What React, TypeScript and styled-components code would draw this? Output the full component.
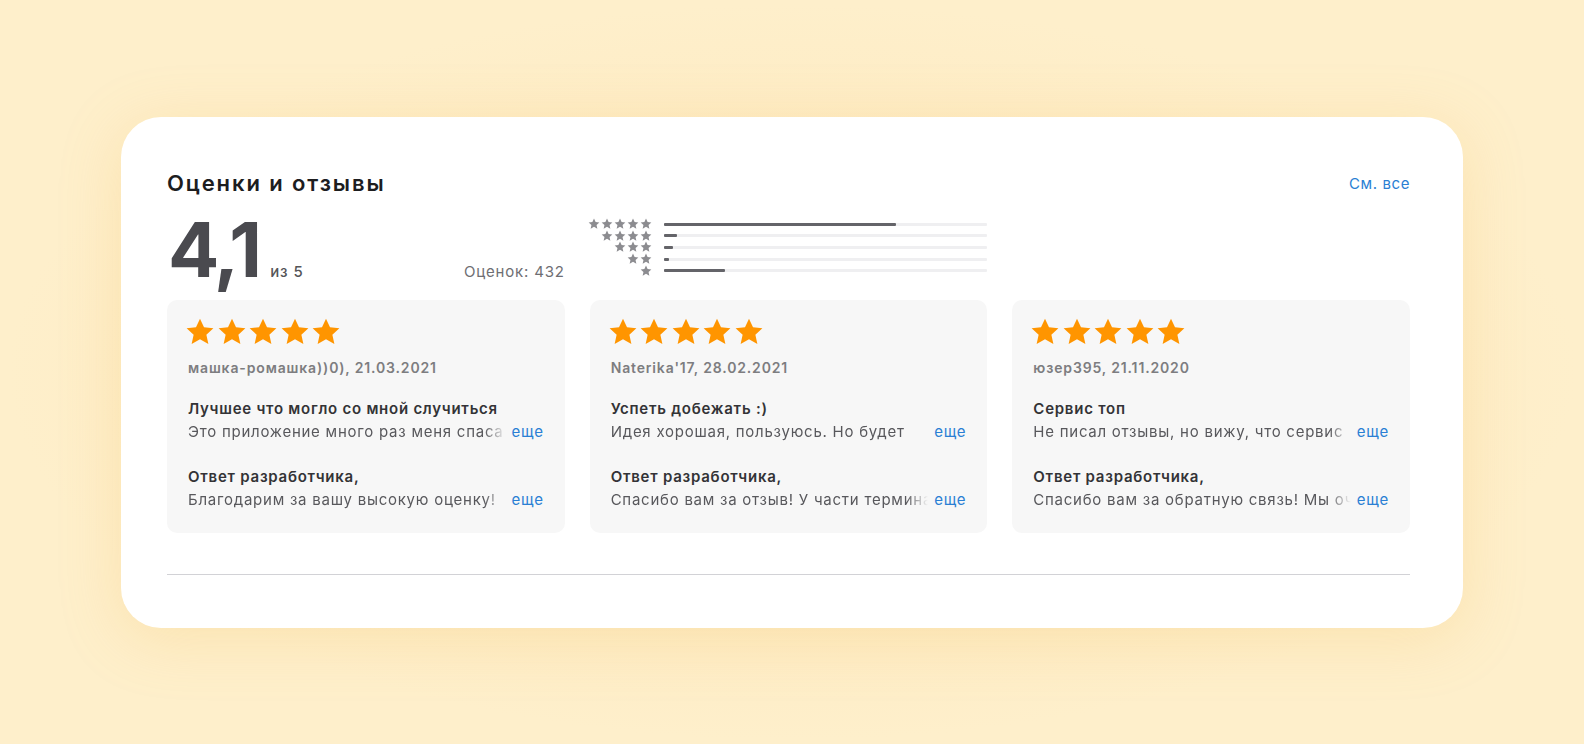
import React from "react";
import styled, { createGlobalStyle } from "styled-components";

const GlobalStyle = createGlobalStyle`
  * { box-sizing: border-box; }
  html, body { margin: 0; padding: 0; }
  body {
    background: #feefcb;
    font-family: Inter, "Noto Sans", "DejaVu Sans", sans-serif;
    -webkit-font-smoothing: antialiased;
  }
`;

const Page = styled.div`
  width: 1584px;
  height: 744px;
  display: flex;
  align-items: center;
  justify-content: center;
  background: radial-gradient(ellipse at center, #fde6b8 0%, #feefcb 70%);
`;

const Card = styled.section`
  width: 1342px;
  height: 511px;
  background: #ffffff;
  border-radius: 40px;
  padding: 52px 53px 0 46px;
  display: flex;
  flex-direction: column;
  box-shadow: 0 10px 60px rgba(245, 190, 90, 0.25);
`;

const HeaderRow = styled.div`
  display: flex;
  align-items: center;
  justify-content: space-between;
  height: 28px;
`;

const Heading = styled.h2`
  margin: 0;
  font-size: 22px;
  line-height: 28px;
  font-weight: 600;
  color: #1d1d1f;
  letter-spacing: 1.9px;
`;

const SeeAll = styled.a`
  font-size: 15px;
  color: #2a7fd4;
  text-decoration: none;
  margin-top: 2px;
  letter-spacing: 0.6px;
`;

const Columns = styled.div`
  display: grid;
  grid-template-columns: repeat(3, minmax(0, 1fr));
  column-gap: 25px;
`;

const SummaryRow = styled(Columns)`
  margin-top: 14px;
  height: 76px;
`;

const ScoreBox = styled.div`
  display: flex;
  align-items: baseline;
  justify-content: space-between;
`;

const ScoreLeft = styled.div`
  display: flex;
  align-items: baseline;
  gap: 11px;
`;

const BigScore = styled.span`
  font-size: 76px;
  line-height: 76px;
  font-weight: 700;
  color: #4a4a4f;
  letter-spacing: -3px;
  margin-left: 1px;
`;

const OutOf = styled.span`
  font-size: 15px;
  font-weight: 500;
  color: #555558;
  letter-spacing: 0.9px;
`;

const Count = styled.span`
  font-size: 15px;
  color: #6e6e73;
  letter-spacing: 0.8px;
`;

const Histogram = styled.div`
  display: grid;
  grid-template-columns: 64px 1fr;
  column-gap: 12px;
  grid-auto-rows: 11.6px;
  margin-top: 8px;
  align-items: center;
  margin-left: -2px;
`;

const StarGroup = styled.div`
  display: flex;
  justify-content: flex-end;
  gap: 1px;
  height: 11.6px;
  align-items: center;
`;

const Track = styled.div`
  height: 3px;
  background: #efeff1;
  border-radius: 1px;
`;

const Fill = styled.div`
  height: 3px;
  background: #646469;
  border-radius: 1px;
`;

const Reviews = styled(Columns)`
  margin-top: 13px;
`;

const ReviewCard = styled.article`
  background: #f7f7f7;
  border-radius: 10px;
  padding: 18px 21px 22px 21px;
  height: 233px;
  display: flex;
  flex-direction: column;
  min-width: 0;
`;

const Stars = styled.div`
  display: flex;
  gap: 1.5px;
  height: 28px;
  align-items: center;
  margin-left: -3px;
`;

const Author = styled.div`
  margin-top: 12px;
  font-size: 14px;
  line-height: 20px;
  font-weight: 600;
  color: #7d7d80;
  letter-spacing: 0.85px;
`;

const Title = styled.div<{ $gap: number }>`
  margin-top: ${(p) => p.$gap}px;
  font-size: 15px;
  line-height: 22px;
  font-weight: 600;
  color: #333336;
  letter-spacing: 0.75px;
`;

const Line = styled.div`
  display: flex;
  align-items: center;
  margin-top: 1px;
  font-size: 15px;
  line-height: 22px;
  letter-spacing: 0.75px;
`;

const Clip = styled.span`
  flex: 1;
  min-width: 0;
  white-space: nowrap;
  color: #58585c;
  -webkit-mask-image: linear-gradient(to right, #000 calc(100% - 22px), transparent);
  mask-image: linear-gradient(to right, #000 calc(100% - 22px), transparent);
`;

const More = styled.a`
  color: #2a7fd4;
  margin-left: 6px;
  text-decoration: none;
  flex: none;
`;

const Divider = styled.hr`
  margin: 41px 0 0 0;
  border: none;
  height: 1px;
  background: #d2d2d6;
`;

const STAR = "M12 1.2l3.2 6.9 7.5.8-5.6 5.1 1.6 7.4L12 17.6l-6.7 3.8 1.6-7.4L1.3 8.9l7.5-.8z";

const SmallStar = () => (
  <svg width="12" height="12" viewBox="0 0 24 24">
    <path d={STAR} fill="#8c8c90" />
  </svg>
);

const BigStar = () => (
  <svg width="30" height="29" viewBox="0 0 24 23">
    <path d={STAR} fill="#ff9500" />
  </svg>
);

const dist = [
  { n: 5, pct: 71.8 },
  { n: 4, pct: 4 },
  { n: 3, pct: 2.8 },
  { n: 2, pct: 1.8 },
  { n: 1, pct: 18.9 },
];

type Review = {
  author: string;
  title: string;
  body: string;
  reply: string;
};

const reviews: Review[] = [
  {
    author: "машка-ромашка))0), 21.03.2021",
    title: "Лучшее что могло со мной случиться",
    body: "Это приложение много раз меня спаса",
    reply: "Благодарим за вашу высокую оценку!",
  },
  {
    author: "Naterika'17, 28.02.2021",
    title: "Успеть добежать :)",
    body: "Идея хорошая, пользуюсь. Но будет",
    reply: "Спасибо вам за отзыв! У части термина",
  },
  {
    author: "юзер395, 21.11.2020",
    title: "Сервис топ",
    body: "Не писал отзывы, но вижу, что сервис",
    reply: "Спасибо вам за обратную связь! Мы оч",
  },
];

export default function App() {
  return (
    <>
      <GlobalStyle />
      <Page>
        <Card>
          <HeaderRow>
            <Heading>Оценки и отзывы</Heading>
            <SeeAll href="#">См. все</SeeAll>
          </HeaderRow>
          <SummaryRow>
            <ScoreBox>
              <ScoreLeft>
                <BigScore>4,1</BigScore>
                <OutOf>из 5</OutOf>
              </ScoreLeft>
              <Count>Оценок: 432</Count>
            </ScoreBox>
            <Histogram>
              {dist.map((d) => (
                <React.Fragment key={d.n}>
                  <StarGroup>
                    {Array.from({ length: d.n }).map((_, i) => (
                      <SmallStar key={i} />
                    ))}
                  </StarGroup>
                  <Track>
                    <Fill style={{ width: `${d.pct}%` }} />
                  </Track>
                </React.Fragment>
              ))}
            </Histogram>
            <div />
          </SummaryRow>
          <Reviews>
            {reviews.map((r) => (
              <ReviewCard key={r.author}>
                <Stars>
                  {Array.from({ length: 5 }).map((_, i) => (
                    <BigStar key={i} />
                  ))}
                </Stars>
                <Author>{r.author}</Author>
                <Title $gap={20}>{r.title}</Title>
                <Line>
                  <Clip>{r.body}</Clip>
                  <More href="#">еще</More>
                </Line>
                <Title $gap={23}>Ответ разработчика,</Title>
                <Line>
                  <Clip>{r.reply}</Clip>
                  <More href="#">еще</More>
                </Line>
              </ReviewCard>
            ))}
          </Reviews>
          <Divider />
        </Card>
      </Page>
    </>
  );
}
